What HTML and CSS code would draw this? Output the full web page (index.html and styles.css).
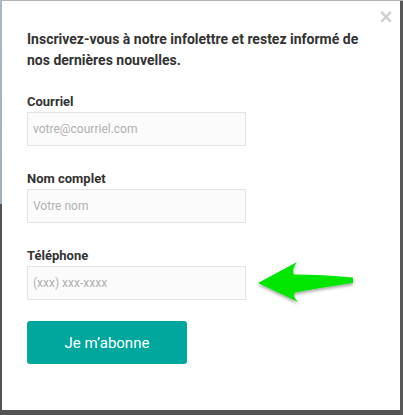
FILE: index.html
```html
<!DOCTYPE html>
<html lang="fr">
<head>
<meta charset="utf-8">
<link rel="stylesheet" href="styles.css">
</head>
<body>
<div class="modal">
  <button class="close" aria-label="Fermer">×</button>
  <h2 class="title">Inscrivez-vous à notre infolettre et restez informé de nos dernières nouvelles.</h2>
  <form class="form">
    <div class="fields">
      <div class="field">
        <label class="label">Courriel</label>
        <input class="input" type="text" placeholder="votre@courriel.com">
      </div>
      <div class="field">
        <label class="label">Nom complet</label>
        <input class="input" type="text" placeholder="Votre nom">
      </div>
      <div class="field">
        <label class="label">Téléphone</label>
        <input class="input" type="text" placeholder="(xxx) xxx-xxxx">
      </div>
    </div>
    <button class="submit" type="button">Je m’abonne</button>
  </form>
  <svg class="arrow" width="110" height="50" viewBox="250 258 110 50">
    <defs>
      <filter id="sh" x="-20%" y="-20%" width="140%" height="160%">
        <feDropShadow dx="0" dy="2" stdDeviation="1.5" flood-color="#000" flood-opacity="0.35"/>
      </filter>
    </defs>
    <path filter="url(#sh)" fill="#00e600" d="M258,283 L297,262 Q291,270 294,274.5 Q322,274.5 353,277.5 L353,283 Q322,287.5 295,292.5 Q292,296 298,302 Z"/>
  </svg>
</div>
</body>
</html>
```
FILE: styles.css
```css
html, body {
  margin: 0;
  padding: 0;
}
body {
  width: 403px;
  height: 415px;
  overflow: hidden;
  background:
    linear-gradient(#b4b4b4, #b4b4b4) top left / 100% 1px no-repeat,
    linear-gradient(#585858, #585858) top right / 3px 100% no-repeat,
    linear-gradient(to bottom, #a9bac7 0, #9cb0bf 204px, #545454 204px) left / 100% 100% no-repeat;
  font-family: Roboto, "Liberation Sans", sans-serif;
  box-sizing: border-box;
  padding: 1px 3px 5px 2px;
}
.modal {
  position: relative;
  background: #fff;
  height: 409px;
  box-sizing: border-box;
  padding: 28px 25px 0 25px;
}
.close {
  position: absolute;
  top: 5px;
  right: 6px;
  border: 0;
  background: none;
  color: #cfcfcf;
  font-size: 19px;
  font-weight: 700;
  line-height: 20px;
  padding: 0;
  font-family: "DejaVu Sans", sans-serif;
}
.title {
  margin: 0;
  font-size: 14px;
  font-weight: 700;
  line-height: 21px;
  color: #333;
  width: 340px;
}
.form {
  display: flex;
  flex-direction: column;
  margin-top: 23px;
}
.fields {
  display: flex;
  flex-direction: column;
  gap: 25px;
}
.field {
  display: flex;
  flex-direction: column;
}
.label {
  font-size: 13px;
  font-weight: 700;
  color: #333;
  line-height: 16px;
  margin-bottom: 2px;
}
.input {
  width: 219px;
  height: 34px;
  box-sizing: border-box;
  border: 1px solid #e3e3e3;
  background: #fbfbfb;
  padding: 0 5px;
  font-family: Roboto, "Liberation Sans", sans-serif;
  font-size: 12px;
  color: #333;
  outline: none;
}
.input::placeholder {
  color: #b0b0b0;
}
.submit {
  width: 160px;
  height: 43px;
  border: 0;
  border-radius: 3px;
  background: #00a79d;
  color: #fff;
  font-family: Roboto, "Liberation Sans", sans-serif;
  font-size: 15px;
  margin-top: 21px;
  padding: 0;
}
.arrow {
  position: absolute;
  left: 248px;
  top: 257px;
}
```
